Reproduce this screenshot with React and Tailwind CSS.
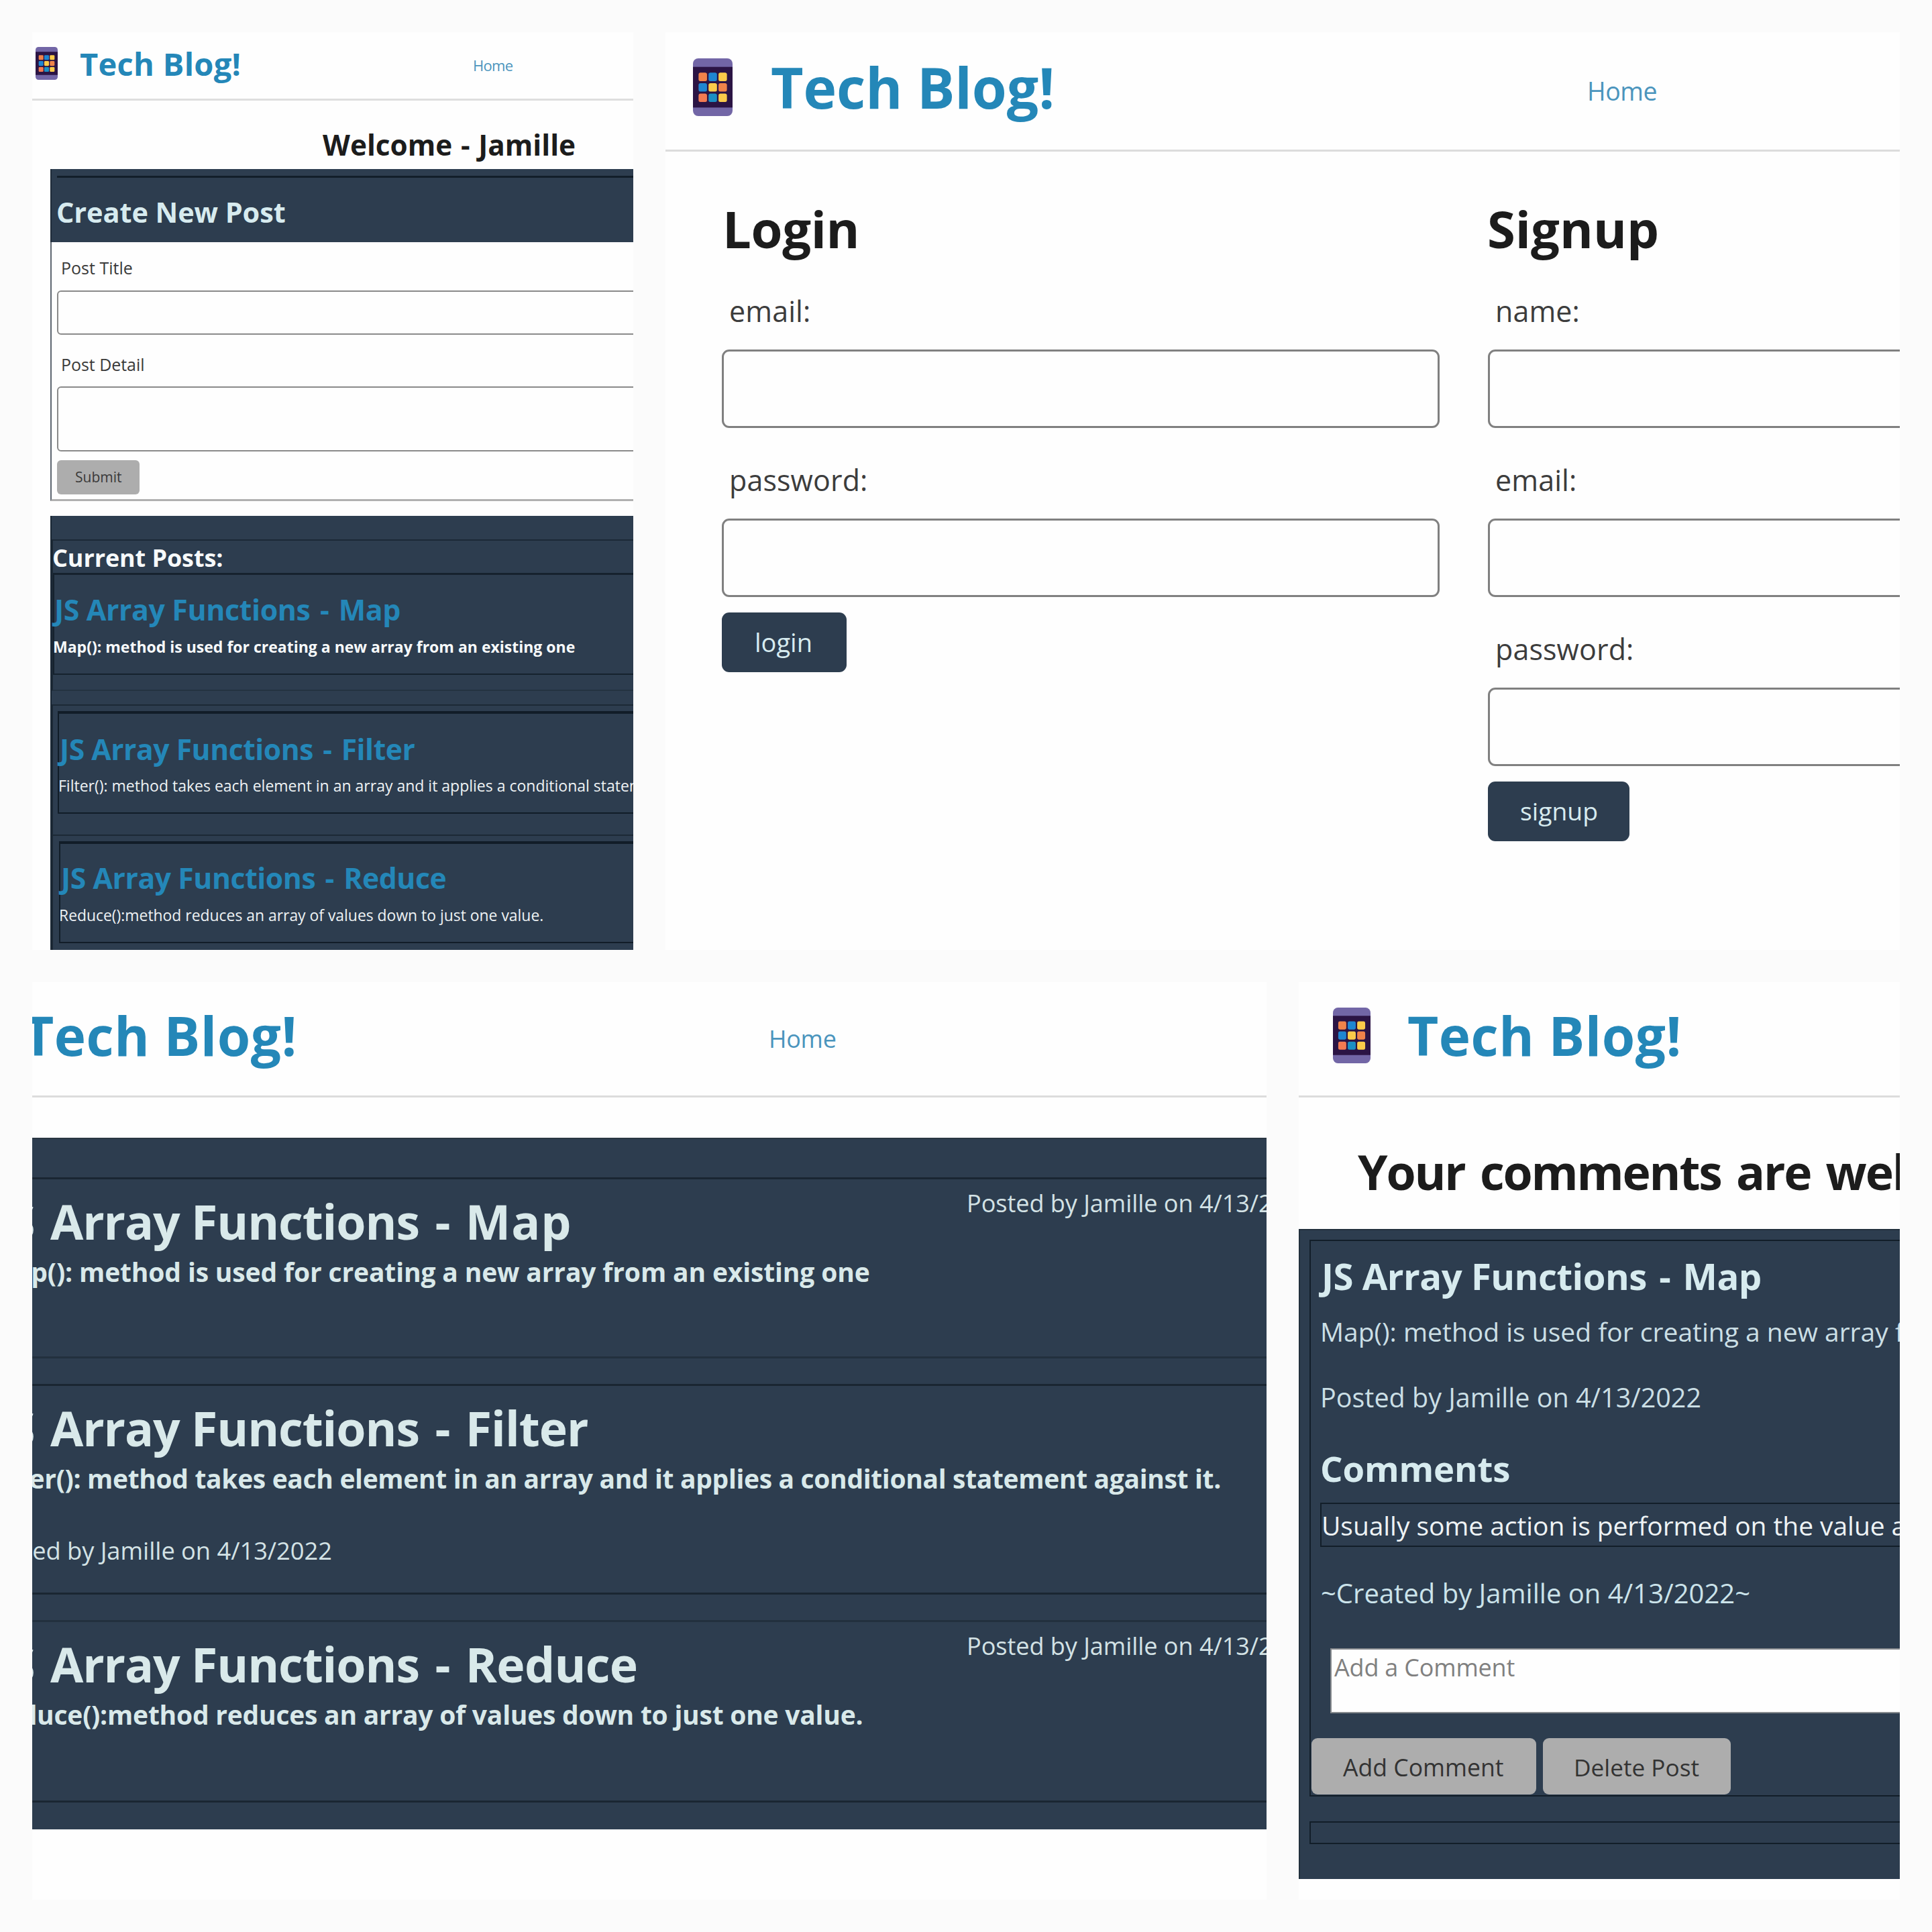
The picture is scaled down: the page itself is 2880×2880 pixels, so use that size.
const TILES = ["#f0834a", "#1e86d2", "#fbcb4a", "#1e86d2", "#fbcb4a", "#f0834a", "#f37b52", "#1b8fc4", "#fbcb4a"];

function PhoneIcon({ className }) {
  return (
    <svg viewBox="0 0 60 86" preserveAspectRatio="none" className={`shrink-0 ${className}`}>
      <rect width="60" height="86" rx="8" fill="#7266a6" />
      <rect y="12.7" width="60" height="60.6" fill="#2b1444" />
      {TILES.map((fill, i) => (
        <rect key={i} x={8.5 + (i % 3) * 15.1} y={21.3 + Math.floor(i / 3) * 15.6} width="12.8" height="12.6" rx="2.5" fill={fill} />
      ))}
    </svg>
  );
}

function Dash() {
  return <span className="mx-[0.085em]">-</span>;
}

function Panel({ children }) {
  return <section className="min-w-0 overflow-hidden bg-[#fefefe]">{children}</section>;
}

function Dashboard() {
  return (
    <Panel>
      <header className="flex h-[102px] items-start border-b-[3px] border-[#dedede]">
        <div className="flex w-[657px] shrink-0 items-start">
          <PhoneIcon className="mt-[22px] ml-[5px] h-[49px] w-[33px]" />
          <h1 className="mt-[24px] ml-[33px] text-[47px] leading-none font-bold tracking-[0.3px] text-[#2487b8]">Tech Blog!</h1>
        </div>
        <a className="mt-[38px] text-[22px] leading-none tracking-[-0.7px] text-[#4b95bd]">Home</a>
      </header>
      <h2 className="mt-[45px] ml-[433px] text-[42.3px] leading-none font-bold text-[#1c1c1c]">
        Welcome <span className="mx-[0.04em]">-</span> Jamille
      </h2>

      <div className="mt-[15px] ml-[27px] w-[1600px]">
        <div className="h-[109px] border-l-2 border-[#1f2c3a] bg-[#2d3d4f] pt-[10px] pl-[8px]">
          <div className="border-t-[3px] border-[#121e2a] pt-[31px]">
            <h3 className="-ml-[1px] text-[41.5px] leading-none font-bold tracking-[-0.1px] text-[#d7ebef]">Create New Post</h3>
          </div>
        </div>
        <form className="h-[386px] border-b-[3px] border-l-2 border-b-[#b0b0b0] border-l-[#5d6670] pt-[26px] pl-[8px]">
          <label className="ml-[6px] block text-[25px] leading-none text-[#3a3a3a]">Post Title</label>
          <div className="mt-[21px] h-[66px] rounded-[6px] border-2 border-[#8a8a8a]" />
          <label className="mt-[32px] ml-[6px] block text-[25px] leading-none tracking-[-0.05px] text-[#3a3a3a]">Post Detail</label>
          <div className="mt-[20px] h-[97px] rounded-[6px] border-2 border-[#8a8a8a]" />
          <button className="mt-[13px] flex h-[51px] w-[123px] items-start rounded-[6px] bg-[#adadad] pt-[15px] pl-[27px] text-[21px] leading-none text-[#3a3a3a]">Submit</button>
        </form>

        <div className="mt-[22px] h-[647px] border-l-2 border-[#1a2734] bg-[#2d3d4f] pt-[35px]">
          <div className="h-[226px] border-2 border-[#1c2936] border-b-[#243341] pt-[8px]">
            <h3 className="-ml-[1px] text-[36px] leading-none font-bold tracking-[-0.1px] text-[#f7fafb]">Current Posts:</h3>
            <div className="mt-[4px] h-[152px] border-t-[3px] border-b-2 border-l-2 border-[#16222e] pt-[31px]">
              <h4 className="text-[42.9px] leading-none font-bold tracking-[-0.4px] text-[#2487b8]">
                JS Array Functions <Dash /> Map
              </h4>
              <p className="mt-[22px] -ml-[2px] text-[23px] leading-none font-bold text-[#f7fafb]">
                Map(): method is used for creating a new array from an existing one
              </p>
            </div>
          </div>
          <div className="mt-[20px] h-[194px] border-t-2 border-l-2 border-[#1c2936] pt-[8px] pl-[7px]">
            <div className="h-[153px] border-t-4 border-b-2 border-l-2 border-[#111d28] pt-[31px]">
              <h4 className="ml-px text-[42.6px] leading-none font-bold tracking-[-0.45px] text-[#2487b8]">
                JS Array Functions <Dash /> Filter
              </h4>
              <p className="mt-[22px] -ml-[1px] text-[23px] leading-none text-[#eef2f4]">
                Filter(): method takes each element in an array and it applies a conditional statement against it.
              </p>
            </div>
          </div>
          <div className="h-[194px] border-t-2 border-l-2 border-[#1c2936] pt-[8px] pl-[9px]">
            <div className="h-[152px] border-t-4 border-b-2 border-l-2 border-[#111d28] pt-[30px]">
              <h4 className="ml-px text-[42.7px] leading-none font-bold tracking-[-0.42px] text-[#2487b8]">
                JS Array Functions <Dash /> Reduce
              </h4>
              <p className="mt-[23px] -ml-[2px] text-[22.9px] leading-none text-[#eef2f4]">
                Reduce():method reduces an array of values down to just one value.
              </p>
            </div>
          </div>
        </div>
      </div>
    </Panel>
  );
}

function Field({ label, className }) {
  return (
    <div className={className}>
      <label className="ml-[11px] block text-[43px] leading-none tracking-[0.1px] text-[#3c3c3c]">{label}</label>
      <div className="mt-[36px] h-[117px] rounded-[11px] border-[3px] border-[#808080]" />
    </div>
  );
}

function Auth() {
  return (
    <Panel>
      <header className="flex h-[178px] items-start border-b-[3px] border-[#dcdcdc]">
        <div className="flex w-[1374px] shrink-0 items-start">
          <PhoneIcon className="mt-[39px] ml-[41px] h-[86px] w-[59px]" />
          <h1 className="mt-[40px] ml-[57px] text-[84px] leading-none font-bold tracking-[-0.1px] text-[#2487b8]">Tech Blog!</h1>
        </div>
        <a className="mt-[69px] text-[37.5px] leading-none tracking-[-0.5px] text-[#4b95bd]">Home</a>
      </header>
      <div className="ml-[84px] flex w-[2400px] gap-[72px] pt-[77px]">
        <div className="w-[1070px] shrink-0">
          <h2 className="ml-px text-[76px] leading-none font-bold tracking-[-0.4px] text-[#1c1c1c]">Login</h2>
          <Field label="email:" className="mt-[63px]" />
          <Field label="password:" className="mt-[56px]" />
          <button className="mt-[23px] flex h-[89px] w-[186px] items-start rounded-[11px] bg-[#2d3d4f] pt-[25px] pl-[49px] text-[38px] leading-none text-[#d7ebef]">login</button>
        </div>
        <div className="w-[1070px] shrink-0">
          <h2 className="-ml-[1px] text-[76px] leading-none font-bold text-[#1c1c1c]">Signup</h2>
          <Field label="name:" className="mt-[63px]" />
          <Field label="email:" className="mt-[56px]" />
          <Field label="password:" className="mt-[56px]" />
          <button className="mt-[23px] flex h-[89px] w-[211px] items-start rounded-[11px] bg-[#2d3d4f] pt-[25px] pl-[48px] text-[37.3px] leading-none text-[#d7ebef]">signup</button>
        </div>
      </div>
    </Panel>
  );
}

function FeedPost({ height, topic, topicTracking, prefix, prefixWidth, body, bodyTracking, aside, below, border }) {
  return (
    <article className={`flex items-start border-y-[3px] ${height} ${border}`}>
      <div className="w-[1393px] shrink-0 whitespace-nowrap">
        <h2 className="mt-[27px] flex text-[71.5px] leading-none font-bold tracking-[-1.1px] text-[#d9e9ea]">
          <span className="flex w-[21px] shrink-0 justify-end whitespace-pre">{"JS "}</span>
          <span className="ml-[6px]">
            Array Functions <Dash /> <span className={topicTracking}>{topic}</span>
          </span>
        </h2>
        <p className={`mt-[19px] flex text-[39px] leading-none font-bold text-[#d9e9ea] ${bodyTracking}`}>
          <span className={`flex shrink-0 justify-end whitespace-pre ${prefixWidth}`}>{prefix}</span>
          <span>{body}</span>
        </p>
        {below && (
          <p className="mt-[70px] flex text-[36.3px] leading-none tracking-[-0.05px] text-[#d3e2e5]">
            <span className="flex w-[52px] shrink-0 justify-end whitespace-pre">{"Posted "}</span>
            <span>by Jamille on 4/13/2022</span>
          </p>
        )}
      </div>
      {aside && <p className="mt-[17px] text-[36.1px] leading-none tracking-[-0.05px] whitespace-nowrap text-[#d3e2e5]">Posted by Jamille on 4/13/2022</p>}
    </article>
  );
}

function Feed() {
  return (
    <Panel>
      <header className="flex h-[172px] items-start border-b-[3px] border-[#dcdcdc]">
        <h1 className="mt-[39px] -ml-[14px] w-[1112px] shrink-0 text-[80px] leading-none font-bold tracking-[0.5px] text-[#2487b8]">Tech Blog!</h1>
        <a className="mt-[67px] text-[36px] leading-none tracking-[-0.3px] text-[#4b95bd]">Home</a>
      </header>
      <main className="mt-[60px] flex h-[1031px] flex-col gap-[38px] border-t-2 border-[#2a3642] bg-[#2d3d4f] pt-[57px]">
        <FeedPost
          height="h-[270px]"
          border="border-t-[#1a2632] border-b-[#22303e]"
          topic="Map"
          topicTracking="tracking-[0.9px]"
          prefix="Map(): "
          prefixWidth="w-[70px]"
          body="method is used for creating a new array from an existing one"
          bodyTracking="tracking-[-0.14px]"
          aside
        />
        <FeedPost
          height="h-[314px]"
          border="border-[#1a2632]"
          topic="Filter"
          topicTracking="tracking-[-1px]"
          prefix="Filter(): "
          prefixWidth="w-[82px]"
          body="method takes each element in an array and it applies a conditional statement against it."
          bodyTracking="tracking-[-0.34px]"
          below
        />
        <FeedPost
          height="h-[272px]"
          border="border-t-[#22303e] border-b-[#1a2632]"
          topic="Reduce"
          topicTracking="tracking-[-0.7px]"
          prefix="Reduce():"
          prefixWidth="w-[112px]"
          body="method reduces an array of values down to just one value."
          bodyTracking="tracking-[-0.23px]"
          aside
        />
      </main>
    </Panel>
  );
}

function PostDetail() {
  return (
    <Panel>
      <header className="flex h-[172px] items-start border-b-[3px] border-[#dcdcdc]">
        <PhoneIcon className="mt-[38px] ml-[51px] h-[83px] w-[56px]" />
        <h1 className="mt-[39px] ml-[55px] text-[80px] leading-none font-bold tracking-[0.5px] text-[#2487b8]">Tech Blog!</h1>
      </header>
      <h2 className="mt-[75px] ml-[88px] text-[71.5px] leading-none font-bold tracking-[-2.2px] whitespace-nowrap text-[#1c1c1c] [word-spacing:6px]">
        Your comments are welcome
      </h2>
      <main className="mt-[49px] h-[969px] w-[1600px] border-t-2 border-l-2 border-[#22303d] bg-[#2d3d4f] pt-[14px] pl-[14px] whitespace-nowrap">
        <article className="h-[830px] border-2 border-[#121e29]">
          <h3 className="mt-[25px] ml-[16px] text-[54.5px] leading-none font-bold tracking-[-0.5px] text-[#d7ebef]">
            JS Array Functions <Dash /> Map
          </h3>
          <p className="mt-[36px] ml-[14px] text-[39px] leading-none text-[#cbdfe5]">Map(): method is used for creating a new array from an existing one</p>
          <p className="mt-[60px] ml-[14px] text-[39.5px] leading-none text-[#cbdfe5]">Posted by Jamille on 4/13/2022</p>
          <h3 className="mt-[59px] ml-[14px] text-[52.7px] leading-none font-bold tracking-[-0.15px] text-[#d7ebef]">Comments</h3>
          <div className="mt-[25px] ml-[14px] h-[66px] border-2 border-[#121e29] pt-[12px]">
            <p className="text-[39px] leading-none tracking-[-0.07px] text-[#eef3f5]">Usually some action is performed on the value and returned</p>
          </div>
          <p className="mt-[49px] ml-[15px] text-[40px] leading-none text-[#cbe3ea]">~Created by Jamille on 4/13/2022~</p>
          <div className="mt-[62px] ml-[29px] h-[97px] border-2 border-[#85898d] bg-[#fefefe] pt-[9px] pl-[4px] text-[36px] leading-none tracking-[-0.2px] text-[#808080]">Add a Comment</div>
          <div className="mt-[37px] ml-[1px] flex gap-[10px]">
            <button className="flex h-[84px] w-[335px] items-start rounded-[9px] bg-[#adadad] pt-[26px] pl-[47px] text-[35.6px] leading-none text-[#333]">Add Comment</button>
            <button className="flex h-[84px] w-[280px] items-start rounded-[9px] bg-[#adadad] pt-[26px] pl-[46px] text-[35.2px] leading-none text-[#333]">Delete Post</button>
          </div>
        </article>
        <div className="mt-[37px] h-[34px] border-2 border-[#121e29]" />
      </main>
    </Panel>
  );
}

export default function App() {
  return (
    <div className="flex h-[2880px] w-[2880px] flex-col gap-[48px] bg-[#fbfbfb] p-[48px] font-['Open_Sans',sans-serif]">
      <div className="grid h-[1368px] grid-cols-[896px_1840px] gap-[48px] whitespace-nowrap">
        <Dashboard />
        <Auth />
      </div>
      <div className="grid h-[1368px] grid-cols-[1840px_896px] gap-[48px] whitespace-nowrap">
        <Feed />
        <PostDetail />
      </div>
    </div>
  );
}
